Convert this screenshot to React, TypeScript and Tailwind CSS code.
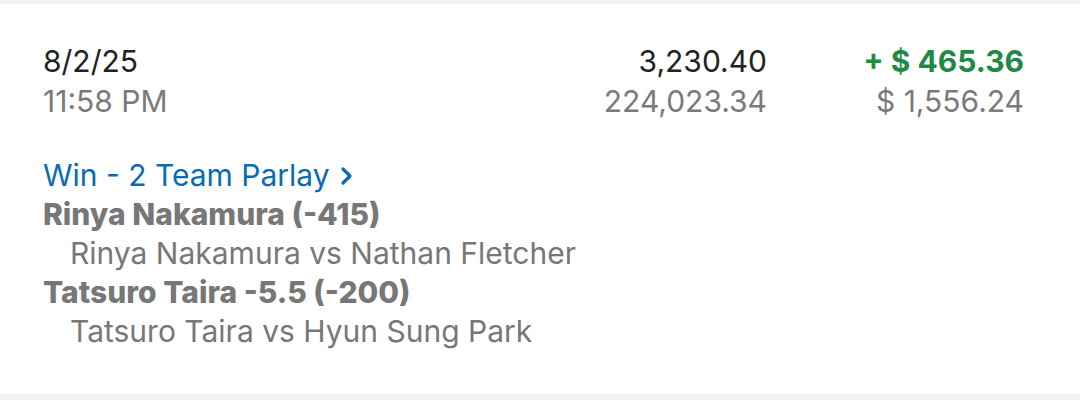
import React from "react";

function Chevron() {
  return (
    <svg width="14" height="20" viewBox="0 0 14 20" className="ml-[10px] inline-block" aria-hidden>
      <path d="M3 3 L10 10 L3 17" fill="none" stroke="currentColor" strokeWidth="3.2" strokeLinecap="round" strokeLinejoin="round" />
    </svg>
  );
}

export default function App() {
  return (
    <div
      className="h-[400px] w-[1080px] bg-[#f1f1f1] pt-[4px] pb-[6px]"
      style={{ fontFamily: "Inter, Roboto, 'Noto Sans', sans-serif" }}
    >
      <div className="h-full bg-white pl-[43px] pr-[56px] pt-[37px]">
        <div className="flex text-[30px] leading-[40px]">
          <div className="flex-1">
            <div className="text-[#222222]">8/2/25</div>
            <div className="text-[#7a7a7a]">11:58 PM</div>
          </div>
          <div className="text-right">
            <div className="text-[#222222]">3,230.40</div>
            <div className="text-[#7a7a7a]">224,023.34</div>
          </div>
          <div className="w-[257px] text-right">
            <div className="font-bold text-[#1f8a45]">+ $ 465.36</div>
            <div className="text-[#7a7a7a]">$ 1,556.24</div>
          </div>
        </div>
        <div className="mt-[35px] text-[30px] leading-[39px]">
          <div className="flex items-center text-[#0a6bb5]">
            Win - 2 Team Parlay
            <Chevron />
          </div>
          <div className="font-extrabold text-[#777777]">Rinya Nakamura (-415)</div>
          <div className="pl-[27px] text-[#777777]">Rinya Nakamura vs Nathan Fletcher</div>
          <div className="font-extrabold text-[#777777]">Tatsuro Taira -5.5 (-200)</div>
          <div className="pl-[27px] text-[#777777]">Tatsuro Taira vs Hyun Sung Park</div>
        </div>
      </div>
    </div>
  );
}
